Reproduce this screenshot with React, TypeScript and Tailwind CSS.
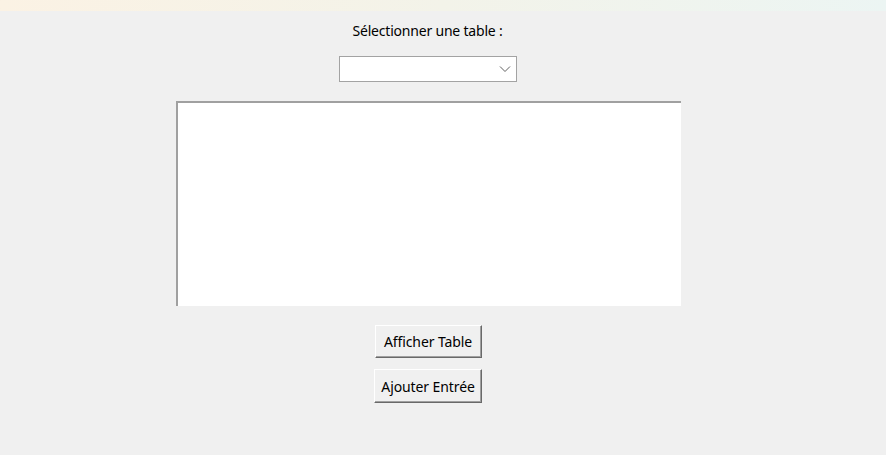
import React from "react";

export default function App() {
  const font = { fontFamily: '"Noto Sans", "Open Sans", sans-serif' };
  return (
    <div className="w-[886px] h-[455px] bg-[#f0f0f0] overflow-hidden flex flex-col" style={font}>
      <div className="h-[11px] w-full bg-gradient-to-r from-[#fbf2e4] via-[#f3f3e9] to-[#ecf5f3]" />
      <div className="w-[855px] flex flex-col items-center">
        <div className="mt-[10px] h-[20px] text-[14px] leading-[20px] text-black tracking-[-0.2px]">Sélectionner une table :</div>
        <div className="mt-[15px] w-[178px] h-[26px] bg-white border border-[#a3a3a3] flex items-center justify-end pr-[4px]">
          <svg width="12" height="8" viewBox="0 0 12 8" className="mr-[1px]">
            <path d="M1 1.5 L6 6.5 L11 1.5" fill="none" stroke="#606060" strokeWidth="1" />
          </svg>
        </div>
        <div className="mt-[19px] w-[505px] h-[205px] bg-white border-t-2 border-l-2 border-t-[#a0a0a0] border-l-[#a0a0a0] ml-[1px]" />
        <div className="mt-[19px] flex flex-col items-center gap-[11px] ml-[1px]">
          <button className="w-[107px] h-[33px] bg-[#f0f0f0] border border-t-white border-l-white border-r-[#696969] border-b-[#696969] shadow-[inset_-1px_-1px_0_#a0a0a0] text-[14px] text-black tracking-[-0.1px]">
            Afficher Table
          </button>
          <button className="w-[108px] h-[34px] bg-[#f0f0f0] border border-t-white border-l-white border-r-[#696969] border-b-[#696969] shadow-[inset_-1px_-1px_0_#a0a0a0] text-[14px] text-black tracking-[-0.1px]">
            Ajouter Entrée
          </button>
        </div>
      </div>
    </div>
  );
}
